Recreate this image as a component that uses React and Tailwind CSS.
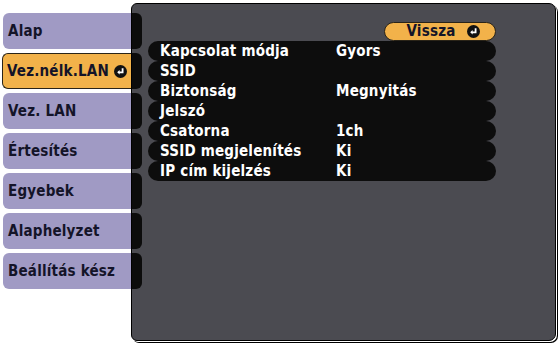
const tabs = [
    'Alap',
    'Vez.nélk.LAN',
    'Vez. LAN',
    'Értesítés',
    'Egyebek',
    'Alaphelyzet',
    'Beállítás kész'
];

const rows = [
    ['Kapcsolat módja', 'Gyors'],
    ['SSID', ''],
    ['Biztonság', 'Megnyitás'],
    ['Jelszó', ''],
    ['Csatorna', '1ch'],
    ['SSID megjelenítés', 'Ki'],
    ['IP cím kijelzés', 'Ki']
];

const EnterIcon = () => (
    <svg width="13" height="13" viewBox="0 0 13 13" className="shrink-0">
        <circle cx="6.5" cy="6.5" r="6.5" fill="#111" />
        <path d="M8.6 3.2 V7.3 H5" stroke="#fff" strokeWidth="1.8" fill="none" />
        <path d="M3.2 7.3 L5.6 5 V9.6 Z" fill="#fff" />
    </svg>
);

const App = () => {
    return (
        <div
            className="relative flex h-[343px] w-[559px] bg-white font-stretch-condensed tracking-[0.2px]"
            style={{ fontFamily: '"DejaVu Sans Condensed", "DejaVu Sans", sans-serif' }}>
            {/* left tabs */}
            <div className="flex w-[131px] shrink-0 flex-col gap-[4px] pl-[3px] pt-[13px]">
                {tabs.map((tab, i) =>
                    i === 1 ? (
                        <div
                            key={tab}
                            className="-ml-[1px] flex h-[36px] items-center gap-[5px] rounded-l-[6px] border border-r-0 border-[#2a2418] bg-[#f2b24a] pl-[4px] text-[15px] font-bold text-[#141428]">
                            {tab}
                            <EnterIcon />
                        </div>
                    ) : (
                        <div
                            key={tab}
                            className="flex h-[36px] items-center rounded-l-[6px] bg-[#a09ac4] pl-[5px] text-[15px] font-bold text-[#141428]">
                            {tab}
                        </div>
                    )
                )}
            </div>

            {/* main panel */}
            <div className="mt-[3px] flex h-[338px] w-[425px] rounded-[7px] rounded-tl-[6px] rounded-bl-[6px] border border-black bg-[#4b4b51] shadow-[1px_1px_0_#fff,2px_2px_0_#000]">
                <div className="flex w-[10px] shrink-0 flex-col gap-[4px] pt-[9px]">
                    {tabs.map((tab) => (
                        <div
                            key={tab}
                            className="h-[36px] rounded-r-[6px] bg-[#0c0c0c]"
                        />
                    ))}
                </div>
                <div className="flex w-[354px] flex-col pl-[6px] pt-[18px]">
                    <div className="flex justify-end">
                        <div className="flex h-[19px] w-[112px] items-center justify-center gap-[11px] rounded-full border border-[#2a2418] bg-[#f2b24a] pl-[6px] text-[15px] font-bold leading-none text-[#141428]">
                            Vissza
                            <EnterIcon />
                        </div>
                    </div>
                    <div className="flex flex-col">
                        {rows.map(([label, value]) => (
                            <div
                                key={label}
                                className="flex h-[20px] items-center rounded-full bg-[#0d0d0d] text-[15px] font-bold leading-none text-white">
                                <span className="w-[188px] pl-[12px]">{label}</span>
                                <span>{value}</span>
                            </div>
                        ))}
                    </div>
                </div>
            </div>
        </div>
    );
};

export default App;
